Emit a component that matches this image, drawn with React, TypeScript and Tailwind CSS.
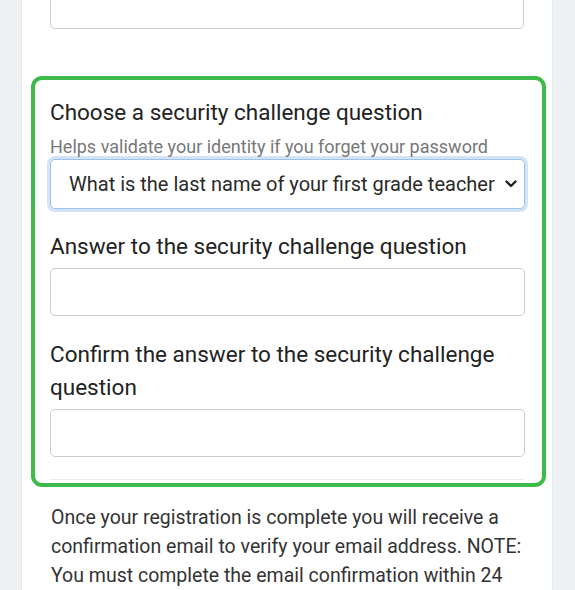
import React from "react";

export default function App() {
  return (
    <div className="w-[575px] h-[590px] overflow-hidden bg-[#eef1f4] font-['Roboto',sans-serif]">
      <div className="ml-[21px] w-[532px] h-[590px] bg-white border-x border-[#e6e9ec] flex flex-col">
        <div className="px-[28px] -mt-[20px]">
          <div className="h-[49px] rounded-[5px] border border-[#c9cdd1] bg-white" />
        </div>
        <div className="mt-[47px] ml-[9px] mr-[6px] rounded-[11px] border-[4px] border-[#3dbb4a] pl-[15px] pr-[17px] pt-[16px] pb-[3px]">
          <div className="text-[22.5px] leading-[33px] text-[#222] whitespace-nowrap">Choose a security challenge question</div>
          <div className="text-[18px] leading-[24px] text-[#777] mt-[6px] whitespace-nowrap">
            Helps validate your identity if you forget your password
          </div>
          <div className="h-[50px] rounded-[5px] border border-[#9ec2ea] shadow-[0_0_0_3px_rgba(160,196,240,0.45)] bg-white flex items-center pl-[18px] pr-[7px]">
            <span className="flex-1 overflow-hidden whitespace-nowrap text-[20px] text-[#2a2a2a]">
              What is the last name of your first grade teacher?
            </span>
            <svg width="12" height="8" viewBox="0 0 12 8" className="ml-[10px] shrink-0">
              <path d="M1.5 1.5 L6 6 L10.5 1.5" fill="none" stroke="#222" strokeWidth="2.4" strokeLinecap="round" strokeLinejoin="round" />
            </svg>
          </div>
          <div className="mt-[21px] text-[22.5px] leading-[33px] text-[#222] whitespace-nowrap">Answer to the security challenge question</div>
          <div className="mt-[5px] h-[48px] rounded-[5px] border border-[#c9cdd1] bg-white" />
          <div className="mt-[22px] text-[22.5px] leading-[33px] text-[#222]">
            Confirm the answer to the security challenge question
          </div>
          <div className="mt-[5px] h-[48px] rounded-[5px] border border-[#c9cdd1] bg-white" />
          <div className="mt-[22px] h-px bg-[#ececec]" />
        </div>
        <div className="px-[29px] mt-[16px] text-[19.5px] leading-[29px] text-[#333]">
          Once your registration is complete you will receive a confirmation email to verify your email address. NOTE: You must complete the email confirmation within 24 hours.
        </div>
      </div>
    </div>
  );
}
